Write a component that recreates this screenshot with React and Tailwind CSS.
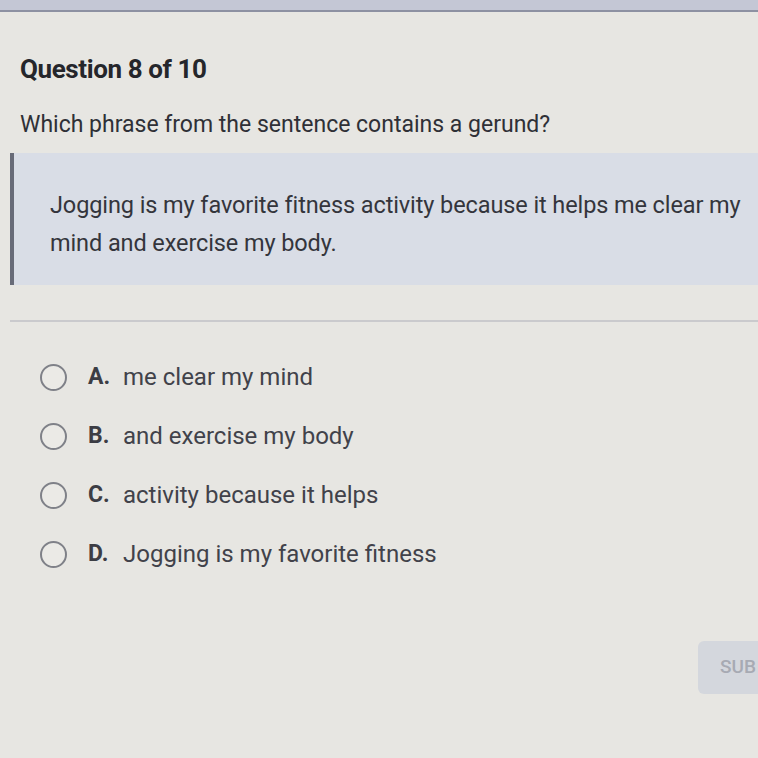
const options = [
  { letter: 'A.', text: 'me clear my mind' },
  { letter: 'B.', text: 'and exercise my body' },
  { letter: 'C.', text: 'activity because it helps' },
  { letter: 'D.', text: 'Jogging is my favorite fitness' },
]

export default function App() {
  return (
    <div className="w-[758px] h-[758px] overflow-hidden bg-[#e7e6e2] font-['Roboto',sans-serif] text-[#2f3036]">
      {/* top bar edge */}
      <div className="h-[12px] bg-[#c4c7d5] border-b-2 border-[#8d91a2]" />

      <div className="pl-[20px] pt-[42px]">
        <h1 className="text-[26px] leading-[30px] font-bold tracking-[-0.4px] text-[#25262b]">Question 8 of 10</h1>
        <p className="mt-[27px] text-[23px] leading-[28px] text-[#2f3036]">
          Which phrase from the sentence contains a gerund?
        </p>
      </div>

      {/* sentence box */}
      <div className="ml-[10px] mt-[14px] border-l-4 border-[#686b78] bg-[#d9dde6] pl-[36px] pt-[33px] pb-[23px]">
        <p className="w-[705px] text-[23.5px] leading-[38px] tracking-[-0.1px] text-[#34353c]">
          Jogging is my favorite fitness activity because it helps me clear my mind and exercise my body.
        </p>
      </div>

      <div className="ml-[10px] mt-[35px] h-[2px] bg-[#cacacd]" />

      {/* answer options */}
      <div className="mt-[41px] pl-[40px] flex flex-col gap-[31px]">
        {options.map((o) => (
          <label key={o.letter} className="flex items-center h-[28px]">
            <span className="w-[27px] h-[27px] rounded-full border-2 border-[#7f8188] bg-[#ebeae6]" />
            <span className="ml-[21px] w-[35px] text-[23px] leading-[28px] font-bold text-[#3c3d44]">{o.letter}</span>
            <span className="text-[24px] leading-[28px] text-[#41424a]">{o.text}</span>
          </label>
        ))}
      </div>

      <div className="flex justify-end mt-[73px]">
        <button className="w-[60px] h-[53px] rounded-l-[6px] bg-[#d4d7dd] text-[19px] font-medium text-[#a7aab3] text-left pl-[22px] whitespace-nowrap overflow-hidden">
          SUB
        </button>
      </div>
    </div>
  )
}
